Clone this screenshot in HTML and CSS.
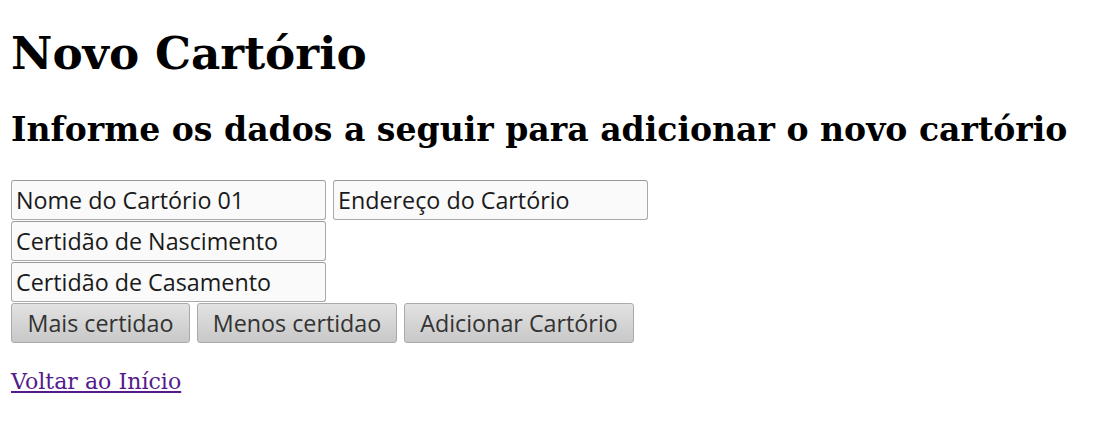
FILE: index.html
```html
<!DOCTYPE html>
<html lang="pt-BR">
<head>
<meta charset="utf-8">
<title>Novo Cartório</title>
<link rel="stylesheet" href="styles.css">
</head>
<body>
<h1 class="title">Novo Cartório</h1>
<h2 class="subtitle">Informe os dados a seguir para adicionar o novo cartório</h2>
<form class="form">
<div class="row"><input class="field" type="text" value="Nome do Cartório 01"><input class="field" type="text" value="Endereço do Cartório"></div>
<div class="row"><input class="field" type="text" value="Certidão de Nascimento"></div>
<div class="row"><input class="field" type="text" value="Certidão de Casamento"></div>
<div class="row buttons"><button class="btn btn-mais" type="button">Mais certidao</button><button class="btn btn-menos" type="button">Menos certidao</button><button class="btn btn-add" type="button">Adicionar Cartório</button></div>
</form>
<p class="back"><a class="back-link" href="#">Voltar ao Início</a></p>
</body>
</html>
```
FILE: styles.css
```css
html, body {
  margin: 0;
  padding: 0;
  background: #fff;
}
body {
  padding: 12px 11px;
  font-family: "DejaVu Serif", serif;
  color: #000;
}
.title {
  font-size: 45.3px;
  font-weight: bold;
  margin: 15px 0 0;
  line-height: 52px;
}
.subtitle {
  font-size: 33.1px;
  font-weight: bold;
  margin: 31px 0 0;
  line-height: 40px;
  white-space: nowrap;
}
.form {
  margin-top: 30px;
  display: flex;
  flex-direction: column;
  gap: 1px;
}
.row {
  display: flex;
  gap: 7px;
}
.field {
  box-sizing: border-box;
  width: 315px;
  height: 40px;
  margin: 0;
  padding: 0 4px;
  border: 1.5px solid #a9a9a9;
  border-top-color: #999;
  border-radius: 3px;
  background: #fafafa;
  font-family: "Open Sans", sans-serif;
  font-size: 23.3px;
  color: #1a1a1a;
}
.btn {
  box-sizing: border-box;
  height: 40px;
  margin: 0;
  padding: 0;
  border: 1.5px solid #aaa;
  border-radius: 3px;
  background: linear-gradient(#e2e2e2, #c8c8c8);
  font-family: "Open Sans", sans-serif;
  font-size: 23.3px;
  color: #333;
}
.btn-mais { width: 179px; }
.btn-menos { width: 200px; }
.btn-add { width: 230px; }
.back {
  margin: 25px 0 0;
  font-size: 22.1px;
  line-height: 26px;
}
.back-link {
  color: #551a8b;
}
```
